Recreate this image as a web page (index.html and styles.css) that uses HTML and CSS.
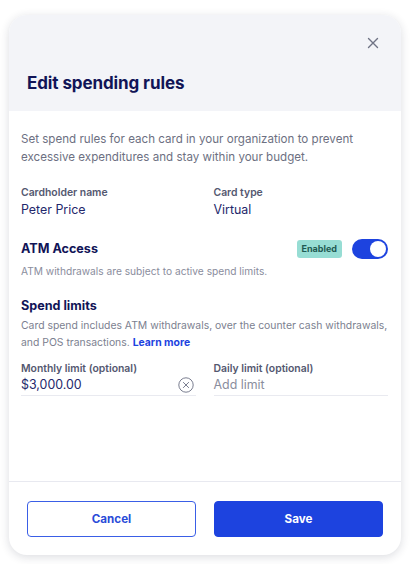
FILE: index.html
```html
<!DOCTYPE html>
<html>
<head>
<meta charset="utf-8">
<link rel="stylesheet" href="styles.css">
</head>
<body>
<div class="modal">
  <div class="modal-header">
    <button class="close" aria-label="Close">
      <svg width="12" height="12" viewBox="0 0 12 12"><path d="M1.5 1.5L10.5 10.5M10.5 1.5L1.5 10.5" stroke="#6f7385" stroke-width="1.4" stroke-linecap="round"/></svg>
    </button>
    <h1 class="title">Edit spending rules</h1>
  </div>
  <div class="modal-body">
    <p class="desc">Set spend rules for each card in your organization to prevent excessive expenditures and stay within your budget.</p>
    <div class="grid details">
      <div class="field">
        <div class="label">Cardholder name</div>
        <div class="value">Peter Price</div>
      </div>
      <div class="field">
        <div class="label">Card type</div>
        <div class="value">Virtual</div>
      </div>
    </div>
    <div class="section atm">
      <div class="row">
        <div class="heading">ATM Access</div>
        <div class="controls">
          <span class="badge">Enabled</span>
          <span class="toggle"><span class="knob"></span></span>
        </div>
      </div>
      <p class="sub">ATM withdrawals are subject to active spend limits.</p>
    </div>
    <div class="section limits">
      <div class="heading">Spend limits</div>
      <p class="sub2">Card spend includes ATM withdrawals, over the counter cash withdrawals, and POS transactions. <a class="link">Learn more</a></p>
      <div class="grid inputs">
        <div class="field">
          <div class="label">Monthly limit (optional)</div>
          <div class="input">
            <span class="value">$3,000.00</span>
            <svg class="clear" width="16" height="16" viewBox="0 0 16 16"><circle cx="8" cy="8" r="7.2" fill="none" stroke="#7a7e90" stroke-width="1"/><path d="M5.4 5.4L10.6 10.6M10.6 5.4L5.4 10.6" stroke="#7a7e90" stroke-width="1" stroke-linecap="round"/></svg>
          </div>
        </div>
        <div class="field">
          <div class="label">Daily limit (optional)</div>
          <div class="input">
            <span class="placeholder">Add limit</span>
          </div>
        </div>
      </div>
    </div>
  </div>
  <div class="modal-footer">
    <button class="btn btn-outline">Cancel</button>
    <button class="btn btn-primary">Save</button>
  </div>
</div>
</body>
</html>
```

FILE: styles.css
```css
* { box-sizing: border-box; }
html, body { margin: 0; padding: 0; background: #ffffff; }
body {
  font-family: Inter, "Noto Sans", sans-serif;
  padding: 15px 15px 9px 9px;
}
.modal {
  width: 392px;
  height: 540px;
  border-radius: 18px;
  background: #fff;
  box-shadow: 0 2px 10px rgba(30, 35, 60, 0.16);
  overflow: hidden;
  display: flex;
  flex-direction: column;
}
.modal-header {
  background: #f3f4f8;
  height: 96px;
  padding: 22px 22px 0 18px;
  display: flex;
  flex-direction: column;
  flex-shrink: 0;
}
.close {
  align-self: flex-end;
  width: 12px;
  height: 12px;
  padding: 0;
  border: 0;
  background: none;
  display: flex;
}
.title {
  margin: 23px 0 0 0;
  font-size: 17px;
  line-height: 22px;
  font-weight: 700;
  color: #111457;
  letter-spacing: -0.1px;
}
.modal-body {
  padding: 19px 13px 0 12px;
  flex: 1;
}
.desc {
  margin: 0;
  font-size: 11.6px;
  line-height: 18px;
  color: #6d7082;
}
.grid {
  display: grid;
  grid-template-columns: 1fr 1fr;
  column-gap: 18px;
}
.details { margin-top: 20px; }
.label {
  font-size: 10.4px;
  line-height: 14px;
  font-weight: 600;
  color: #545870;
}
.value {
  font-size: 12.4px;
  line-height: 18px;
  color: #23276b;
  margin-top: 1px;
}
.section.atm { margin-top: 20px; }
.row {
  display: flex;
  justify-content: space-between;
  align-items: center;
}
.heading {
  font-size: 12.6px;
  line-height: 18px;
  font-weight: 700;
  color: #111457;
}
.controls {
  display: flex;
  align-items: center;
  gap: 10px;
}
.badge {
  background: #97ddd4;
  color: #1f5a53;
  font-size: 9px;
  font-weight: 700;
  line-height: 18px;
  height: 18px;
  padding: 0 5px;
  border-radius: 3px;
}
.toggle {
  width: 36px;
  height: 20px;
  border-radius: 10px;
  background: #1d43df;
  display: flex;
  align-items: center;
  justify-content: flex-end;
  padding: 2px;
}
.knob {
  width: 16px;
  height: 16px;
  border-radius: 50%;
  background: #fff;
}
.sub {
  margin: 5px 0 0 0;
  font-size: 10.2px;
  line-height: 14px;
  color: #8a8d9d;
}
.section.limits { margin-top: 19px; }
.sub2 {
  margin: 2px 0 0 0;
  font-size: 10.4px;
  line-height: 17px;
  color: #7c7f90;
}
.link {
  color: #1d43df;
  font-weight: 700;
}
.inputs { margin-top: 11px; }
.input {
  display: flex;
  align-items: center;
  justify-content: space-between;
  border-bottom: 1px solid #e9eaf0;
  height: 20px;
  padding-bottom: 1px;
}
.input .value { margin-top: 0; }
.clear { margin-right: 2px; }
.placeholder {
  font-size: 12.4px;
  line-height: 18px;
  color: #8a8d9d;
}
.modal-footer {
  border-top: 1px solid #e8e9f0;
  height: 74px;
  padding: 19px 18px 0 18px;
  display: grid;
  grid-template-columns: 1fr 1fr;
  column-gap: 18px;
  align-items: start;
}
.btn {
  height: 36px;
  border-radius: 4px;
  font-family: Inter, "Noto Sans", sans-serif;
  font-size: 11.6px;
  font-weight: 700;
}
.btn-outline {
  background: #fff;
  border: 1px solid #3a5ee6;
  color: #2a4bd8;
}
.btn-primary {
  background: #1d43df;
  border: 1px solid #1d43df;
  color: #fff;
}
```
